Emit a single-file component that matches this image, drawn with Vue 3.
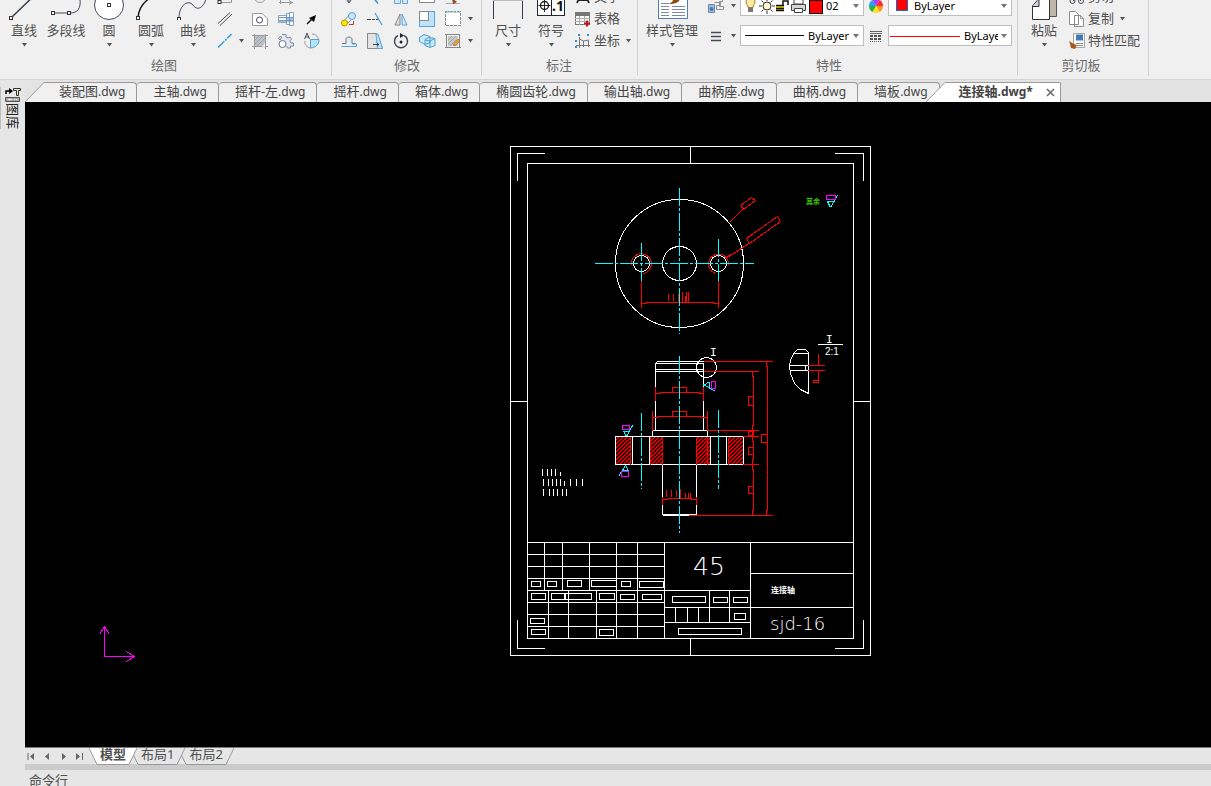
<script setup>
import { ref } from 'vue'

const curveTools = [
  { id: 'line', label: '直线', caret: true },
  { id: 'polyline', label: '多段线', caret: false },
  { id: 'circle', label: '圆', caret: true },
  { id: 'arc', label: '圆弧', caret: true },
  { id: 'spline', label: '曲线', caret: true },
]
const dimTools = [
  { id: 'dimension', label: '尺寸' },
  { id: 'symbol', label: '符号' },
]
const drawGrid = [
  'leader', '', 'ellipse', 'distance', '',
  'parallel', '', 'region', 'bolt', 'arrow',
  'axis', 'caret', 'hatch', 'gear', 'turn',
]
const modifyGrid = [
  'move', 'trim', 'array', 'stretch', 'brush', '',
  'copyobj', 'extend', 'mirror', 'scale', 'frame', 'caret',
  'offset', 'chamfer', 'rotate', 'block', 'edit', 'caret',
]
const textTools = [
  { id: 'text', label: '文字', caret: false },
  { id: 'table', label: '表格', caret: false },
  { id: 'coord', label: '坐标', caret: true },
]
const clipTools = [
  { id: 'cut', label: '剪切', caret: false },
  { id: 'copy', label: '复制', caret: true },
  { id: 'match', label: '特性匹配', caret: false },
]
const files = ['装配图', '主轴', '摇杆-左', '摇杆', '箱体', '椭圆齿轮', '输出轴', '曲柄座', '曲柄', '墙板', '连接轴']
const activeFile = ref(10)
const layouts = ['模型', '布局1', '布局2']
const activeLayout = ref(0)

const seg = (list) => list.map(([a, b, c, d]) => `M${a} ${b}L${c} ${d}`).join('')
const box = (list) => list.map(([a, b, c, d]) => `M${a} ${b}H${c}V${d}H${a}Z`).join('')

const sheet = box([[510, 146, 870, 655], [527, 163, 853, 638]]) + seg([
  [517, 153, 544, 153], [517, 153, 517, 180], [835, 153, 863, 153], [863, 153, 863, 180],
  [517, 620, 517, 648], [517, 648, 544, 648], [863, 620, 863, 648], [835, 648, 863, 648],
  [690, 146, 690, 163], [690, 638, 690, 655], [510, 401, 527, 401], [853, 401, 870, 401],
])

const titleBlock = seg([
  [527, 542, 853, 542],
  ...[554, 566, 578, 590, 602, 614, 626].map((y) => [527, y, 664, y]),
  ...[544, 562, 589, 616, 637].map((x) => [x, 542, x, 590]),
  ...[548, 568, 596, 616, 637].map((x) => [x, 590, x, 638]),
  [664, 542, 664, 638], [750, 542, 750, 638], [664, 590, 750, 590],
  [750, 573, 853, 573], [664, 607, 853, 607], [664, 622, 750, 622],
  [709, 590, 709, 622], [729, 590, 729, 622],
  ...[675, 687, 698].map((x) => [x, 607, x, 622]),
]) + box([
  [531, 581, 540, 586], [547, 581, 556, 586], [567, 580, 581, 586], [591, 580, 616, 586],
  [621, 581, 630, 586], [639, 581, 663, 587], [531, 593, 545, 599], [551, 593, 564, 599],
  [565, 593, 591, 599], [599, 593, 614, 599], [620, 594, 634, 599], [642, 594, 661, 599],
  [530, 618, 544, 623], [531, 629, 545, 634], [599, 629, 613, 635], [672, 596, 705, 602],
  [713, 597, 727, 602], [733, 597, 747, 602], [734, 613, 745, 619], [678, 628, 741, 634],
])

const notes = seg([
  ...[542, 547, 551, 555].map((x) => [x, 468, x, 475]), [560, 471, 560, 475],
  ...[543, 548, 552, 556, 560, 570, 576, 582].map((x) => [x, 478, x, 485]), [564, 480, 564, 485],
  ...[543, 549, 553, 557, 562, 566].map((x) => [x, 488, x, 495]),
])

const outline = seg([
  [657, 361, 703, 361], [657, 361, 655, 363], [655, 363, 703, 363], [655, 369, 703, 369],
  [656, 371, 703, 371], [655, 363, 655, 430], [703, 363, 703, 430], [696, 363, 696, 371],
  [652, 430, 707, 430], [652, 430, 652, 436], [707, 430, 707, 436],
  [632, 436, 632, 464], [649, 436, 649, 464], [710, 436, 710, 464], [726, 436, 726, 464],
  [662, 464, 662, 514], [696, 464, 696, 514], [662, 514, 696, 514], [663, 515, 689, 515],
  [818, 344, 842, 344], [808, 352, 808, 393], [794, 353, 808, 353],
  [789, 365, 808, 365], [790, 370, 808, 370], [805, 365, 805, 370],
]) + box([[615, 436, 743, 464]])

const dims = seg([
  [641, 281, 641, 307], [718, 281, 718, 307], [646, 302, 713, 302], [641, 303, 646, 303], [713, 303, 718, 303],
  [668, 294, 668, 300], [673, 294, 673, 300], [678, 294, 678, 301], [682, 292, 682, 302],
  [685, 296, 685, 302], [686, 292, 686, 302], [688, 292, 688, 302],
  [730, 221, 743, 208], [727, 257, 750, 242], [727, 256, 731, 254],
  [704, 361, 772, 361], [704, 371, 758, 371], [707, 430, 758, 430], [743, 436, 758, 436],
  [743, 464, 758, 464], [689, 515, 772, 515],
  [655, 387, 655, 400], [703, 387, 703, 400], [660, 392, 699, 392], [655, 393, 660, 393], [699, 393, 703, 393],
  [652, 411, 652, 430], [707, 411, 707, 430], [657, 416, 702, 416], [652, 417, 657, 417], [702, 417, 707, 417],
  [662, 497, 662, 504], [696, 497, 696, 504], [667, 498, 691, 498], [662, 499, 667, 499], [691, 499, 696, 499],
  [666, 490, 666, 496], [671, 490, 671, 496], [676, 490, 676, 496], [680, 489, 680, 498],
  [685, 493, 685, 497], [688, 493, 688, 497], [690, 493, 690, 497],
  [752, 371, 752, 376], [753, 376, 753, 425], [752, 425, 752, 441], [753, 441, 753, 459],
  [752, 459, 752, 469], [753, 469, 753, 510], [752, 510, 752, 515],
  [766, 361, 766, 366], [767, 366, 767, 510], [766, 510, 766, 515],
  [808, 365, 824, 365], [808, 370, 824, 370], [818, 354, 818, 365], [818, 370, 818, 382],
]) + box([
  [672, 387, 686, 392], [672, 411, 686, 416], [748, 396, 753, 405], [748, 431, 753, 435],
  [748, 447, 753, 454], [748, 486, 753, 493], [761, 434, 767, 442], [813, 380, 818, 382],
])
const hatchEdges = seg([630, 650, 662, 696, 707, 728].map((x) => [x, 437, x, 464]))
const hatchAreas = [[616, 15], [650, 13], [696, 14], [728, 15]]
const axes = seg([
  [594, 263, 753, 263], [679, 187, 679, 333], [641, 242, 641, 280], [718, 238, 718, 280],
  [679, 355, 679, 532], [641, 412, 641, 488], [718, 409, 718, 488],
])
const finish = seg([
  [827, 201, 834, 201], [827, 201, 830, 207], [830, 207, 837, 195],
  [703, 385, 709, 381], [709, 381, 709, 388], [703, 384, 715, 391],
  [622, 431, 629, 431], [623, 431, 626, 436], [626, 436, 632, 425],
  [622, 470, 628, 470], [628, 470, 625, 465], [625, 465, 618, 476],
])
const finishTags = box([[826, 195, 835, 199], [711, 381, 715, 388], [622, 425, 629, 429], [621, 471, 628, 476]])
</script>

<template>
  <div class="app">
    <svg class="defs" aria-hidden="true">
      <symbol id="caret" viewBox="0 0 7 6"><path d="M1 1h5L3.500 4.500z" fill="#555" /></symbol>

      <symbol id="line" viewBox="0 0 40 34"><path d="M8 31 38 2" stroke="#394150" stroke-width="1.500" /><rect x="5.500" y="30.500" width="3" height="3" class="node" /></symbol>
      <symbol id="polyline" viewBox="0 0 40 34"><path d="M7 27H24C32 27 35 22 34 13" class="ink" /><rect x="5.500" y="25.500" width="3" height="3" class="node" /><rect x="21.500" y="25.500" width="3" height="3" class="node" /></symbol>
      <symbol id="circle" viewBox="0 0 40 34"><circle cx="20" cy="19" r="14.500" fill="#fff" stroke="#444b58" /><rect x="18.500" y="17.500" width="3" height="3" class="node" /></symbol>
      <symbol id="arc" viewBox="0 0 40 34"><path d="M7 31C8 22 13 15 22 10" fill="none" stroke="#111" stroke-width="1.400" /><rect x="5.500" y="30.500" width="3" height="3" class="node" /></symbol>
      <symbol id="spline" viewBox="0 0 40 34"><path d="M6 32C6 20 14 14 19 18C23 24 28 24 32 16L33 12" class="ink" /><rect x="4.500" y="31.500" width="3" height="3" class="node" /></symbol>
      <symbol id="dimension" viewBox="0 0 40 34"><path d="M5.500 8V33M34.500 8V33" stroke="#394150" /><path d="M5 14.500H35" stroke="#bbb" /></symbol>
      <symbol id="symbol" viewBox="0 0 40 34"><rect x="6.500" y="4.500" width="27" height="25" fill="#fff" stroke="#222b3a" /><path d="M20.500 5V29M7.500 19.500H19.500M13.500 13V26" stroke="#222" /><circle cx="13.500" cy="19.500" r="4" fill="none" stroke="#222" stroke-width="1.400" /></symbol>
      <symbol id="styles" viewBox="0 0 40 34"><rect x="6.500" y="2.500" width="29" height="30" fill="#fff" stroke="#4d7fb0" /><path d="M9 17.500H17M9 20.500H17M9 23.500H17M9 26.500H17M9 29.500H17M20 20.500H33M20 23.500H33M20 26.500H33M20 29.500H33" stroke="#7d8aa0" /><path d="M28 10c1 5-3 8-11 8 4-2 4-4 6-8z" fill="#8a4b14" /></symbol>
      <symbol id="paste" viewBox="0 0 40 34"><path d="M22 8H33V30H22z" fill="#c0b8aa" /><path d="M32.500 8V30.500H26" fill="none" stroke="#555" /><path d="M8.500 20 14.500 13H25.500V33.500H8.500z" fill="#fff" stroke="#333" /><path d="M9 20.500h6V13" fill="#cbd3dc" stroke="#333" /></symbol>

      <symbol id="leader" viewBox="0 0 18 18"><path d="M3 14.500H15.500V9" class="thin" /><rect x="2" y="12.500" width="3" height="3" class="node" /></symbol>
      <symbol id="ellipse" viewBox="0 0 18 18"><circle cx="9" cy="8.500" r="6" class="thin" /></symbol>
      <symbol id="distance" viewBox="0 0 18 18"><path d="M3.500 6V16M2 14.500H16M12 12.500l3 2-3 2" class="thin" /></symbol>
      <symbol id="parallel" viewBox="0 0 18 18"><path d="M2 13.500 14 2.500M4 15.500 16 4" class="ink" stroke="#555" /></symbol>
      <symbol id="region" viewBox="0 0 18 18"><path d="M1.500 3.500H11L16.500 8.500V15.500H1.500z" fill="#fff" stroke="#999" /><circle cx="8.500" cy="10" r="3" class="ink" /></symbol>
      <symbol id="bolt" viewBox="0 0 18 18"><path d="M1.500 5.500h8v-2h3v-1h4v13h-4v-1h-3v-2h-8z" fill="#fff" stroke="#8aa0bd" /><path d="M10 8h6v4h-6zM2 10h7v2H2z" fill="#9cc3e8" /><path d="M2 7.500H16M2 10.500H16M9.500 4V14M12.500 3V15" stroke="#6f94bf" /></symbol>
      <symbol id="arrow" viewBox="0 0 18 18"><path d="M4 14 9 9" stroke="#111" stroke-width="1.500" /><path d="M13 5 11 12 6 8z" fill="#000" /></symbol>
      <symbol id="axis" viewBox="0 0 18 18"><path d="M2 15.500 15.500 2" stroke="#2196d6" stroke-width="1.300" stroke-dasharray="9 1 2 1" /></symbol>
      <symbol id="hatch" viewBox="0 0 18 18"><rect x="3" y="4" width="12" height="11" fill="#bcc0c8" /><path d="M1 3.500H17M3.500 2V17M14.500 2V17M1 14.500H17" stroke="#999" /><path d="M4 8 8 4M4 12 12 4M6 14 14 6" stroke="#999" stroke-width=".7" /><path d="M9 14.500c3 0 5-2 5-5v5z" fill="#fff" /></symbol>
      <symbol id="gear" viewBox="0 0 18 18"><path d="M5 2.500h4v2.500l2 1 2-1 1.500 2-1.500 2 1 2h2.500v3h-3v2h-3l-1-2M3 8 1.500 6.500 3 4.500l2 .5z" fill="#e3e7f2" stroke="#7e88a0" /><circle cx="5.500" cy="12" r="3.500" fill="#fff" stroke="#66708a" /></symbol>
      <symbol id="turn" viewBox="0 0 18 18"><path d="M7.500 7.500h8.500c0 5-3 8-8.500 8.500z" fill="#b8e3fb" stroke="#4ba3d4" /><path d="M9 2c4 0 6 3 6.500 5.500M2 9c-1 3 2 7 6 7" class="thin" /><path d="M1.500 7 4 1 6.500 7M2.500 5h3" class="ink" stroke="#111" /></symbol>

      <symbol id="move" viewBox="0 0 18 18"><path d="M9 6v8M7 12l2 3 2-3" class="ink" /></symbol>
      <symbol id="trim" viewBox="0 0 18 18"><path d="M6 8 12 15.500" stroke="#3b93d0" stroke-width="1.500" /></symbol>
      <symbol id="array" viewBox="0 0 18 18"><path d="M2.500 7.500h6v8h-6zM10.500 7.500h5v8h-5z" fill="#cfe8f8" stroke="#6da6cf" /></symbol>
      <symbol id="stretch" viewBox="0 0 18 18"><rect x="1.500" y="7.500" width="15" height="7" fill="#fff" stroke="#888" /></symbol>
      <symbol id="brush" viewBox="0 0 18 18"><path d="M2 15.500h14" stroke="#aaa" /><path d="m8 10 5 4-4 2z" fill="#8e4a25" /></symbol>
      <symbol id="copyobj" viewBox="0 0 18 18"><path d="M3 12 9 5M7 14l7-7" stroke="#999" /><circle cx="12" cy="6" r="3.500" fill="#c9e8fb" stroke="#4ba3d4" /><circle cx="4.500" cy="13" r="3" fill="#ffe600" stroke="#b29b00" /><path d="M9 14.500h4.500V11" fill="none" stroke="#b33" /></symbol>
      <symbol id="extend" viewBox="0 0 18 18"><path d="M1 9.500h4m1 0h3m1 0h3" stroke="#444" /><path d="M9 3 16 15" stroke="#4ba3d4" stroke-width="1.300" /></symbol>
      <symbol id="mirror" viewBox="0 0 18 18"><path d="M8 4v11H3z" fill="#ddd" stroke="#888" /><path d="M10 4v11h5z" fill="#cfe8fb" stroke="#5aa4d2" /></symbol>
      <symbol id="scale" viewBox="0 0 18 18"><rect x="1.500" y="1.500" width="15" height="15" fill="#bfe3f8" stroke="#58a6d8" /><rect x="1.500" y="1.500" width="9" height="9" fill="#fff" stroke="#888" /></symbol>
      <symbol id="frame" viewBox="0 0 18 18"><rect x="1.500" y="2" width="15" height="13.500" fill="#fff" stroke="#888" stroke-dasharray="3 1" /><path d="M1 1.500H17" stroke="#58a6d8" stroke-dasharray="2 1" /></symbol>
      <symbol id="offset" viewBox="0 0 18 18"><path d="M2 11.500h4V8c-1-4 7-4 6 0v3.500h4" stroke="#777" fill="#d8effc" /><path d="M1.500 14.500h15V12H12" fill="none" stroke="#58a6d8" /></symbol>
      <symbol id="chamfer" viewBox="0 0 18 18"><path d="M1.500 1.500h9l6 15h-15z" fill="#e3e3e3" stroke="#888" /><path d="M10 2h2l4.500 14.500h-5z" fill="#bfe3f8" stroke="#58a6d8" /><path d="M7 12.500h6M11 11l2 1.500-2 1.500" class="ink" /></symbol>
      <symbol id="rotate" viewBox="0 0 18 18"><path d="M6 3.500a6.500 6.500 0 1 0 6 0" class="ink" stroke-width="1.500" /><path d="M8 1v5l4-2.500z" fill="#222" /><circle cx="9" cy="10" r="1.500" fill="#222" /></symbol>
      <symbol id="block" viewBox="0 0 18 18"><path d="M1.500 5.500 6 2.500l6 2v6l-5 2-5.500-3zM7 7.500l4-2 6 1v7l-5 2-5-2z" fill="#cceafb" stroke="#4a9fce" /><path d="m7 8 5 1 4-2m-4 2v6" fill="none" stroke="#4a9fce" /></symbol>
      <symbol id="edit" viewBox="0 0 18 18"><path d="M2.500 2V16M1 2.500h15M15.500 2v14M1 15.500h16" stroke="#888" /><rect x="4" y="4" width="10" height="10" fill="#c8c8c8" /><path d="m4 8 4-4M4 12l8-8M6 14l6-6" stroke="#999" stroke-width=".7" /><path d="m9 13 5-6 2 2-5 5z" fill="#eaa02e" stroke="#a66b1d" stroke-width=".6" /></symbol>

      <symbol id="text" viewBox="0 0 18 18"><path d="M3 15 8 4h2l5 11M5 12h8" fill="none" stroke="#222" stroke-width="1.800" /></symbol>
      <symbol id="table" viewBox="0 0 18 18"><rect x="1.500" y="2.500" width="14" height="12" fill="#fff" stroke="#777" /><path d="M2 3h13v3H2z" fill="#777" /><path d="M1 8.500h15M1 11.500h15M5.500 6v9M10.500 6v9" stroke="#aaa" /><path d="M10 13.500h6M13 10.500v6" stroke="#c4161c" stroke-width="2" /></symbol>
      <symbol id="coord" viewBox="0 0 18 18"><path d="M5.500 5v11M2 13.500h14M5.500 7l4 2 5-1v7M9.500 9v6" fill="none" stroke="#777" /><path d="M4 2l2 2m0-2L4 4M13 2l2 2m0-2-2 2M1 8l2 2m0-2-2 2M1 14l2 2m0-2-2 2" stroke="#2f8dd0" /></symbol>
      <symbol id="cut" viewBox="0 0 18 18"><path d="M5 13 14 5M13 13 5 5" class="ink" /><circle cx="4.500" cy="13" r="2.500" class="ink" /><circle cx="13" cy="13" r="2.500" class="ink" /></symbol>
      <symbol id="copy" viewBox="0 0 18 18"><path d="M1.500 1.500h6l3 3v10h-9zM6.500 5.500h6l3 3v8h-9z" fill="#fff" stroke="#8c8c8c" /><path d="M12.500 5.500v3h3" class="thin" /></symbol>
      <symbol id="match" viewBox="0 0 18 18"><rect x="5.500" y="1.500" width="11" height="14" fill="#fff" stroke="#a6a6a6" /><path d="M8 2.500h7v6H8z" fill="#3f79b7" /><path d="M8 11.500h7M9 13.500h6" stroke="#888" /><path d="m1 9 5 3 3 1-2 4-4-1-1-4z" fill="#a8581c" /></symbol>
      <symbol id="layers" viewBox="0 0 18 18"><path d="M1.500 7.500h6v8h-6z" fill="#9dbde0" stroke="#718aa8" /><path d="M7.500 5.500h6v3h-4v4h7v-3h-4v-5h3v-2" fill="none" stroke="#8b8f96" /><circle cx="4.500" cy="12" r="2" fill="#3f79b7" /></symbol>
      <symbol id="rows" viewBox="0 0 18 18"><path d="M4 5.500h10M4 9.500h10M4 13.500h10" stroke="#444b58" stroke-width="1.400" /></symbol>
      <symbol id="wheel" viewBox="0 0 18 18"><path d="M9 9 5.500 3a7 7 0 0 1 7 0z" fill="#a63cff" /><path d="m9 9 3.500-6A7 7 0 0 1 16 9z" fill="#ff2b2b" /><path d="M9 9h7a7 7 0 0 1-3.500 6z" fill="#ff9820" /><path d="m9 9 3.500 6a7 7 0 0 1-7 0z" fill="#ffe11c" /><path d="m9 9-3.500 6A7 7 0 0 1 2 9z" fill="#29b14a" /><path d="M9 9H2a7 7 0 0 1 3.500-6z" fill="#2c9bea" /></symbol>
      <symbol id="weights" viewBox="0 0 18 18"><path d="M3 4.500h12M3 6.500h12" stroke="#666" /><path d="M3 9h12M3 12h12" stroke="#555" stroke-width="2" stroke-dasharray="3 1" /><path d="M3 14.500h12" stroke="#666" stroke-dasharray="1 1" /></symbol>
    </svg>

    <header class="ribbon">
      <section class="group draw">
        <div class="body">
          <button v-for="t in curveTools" :key="t.id" class="big" :class="{ wide: t.id === 'polyline' }">
            <svg width="40" height="34"><use :href="'#' + t.id" /></svg>
            <span>{{ t.label }}</span>
            <svg v-if="t.caret" width="7" height="6"><use href="#caret" /></svg>
          </button>
          <div class="grid draw-grid">
            <template v-for="(id, i) in drawGrid" :key="i">
              <span v-if="!id" />
              <button v-else :aria-label="id"><svg :class="{ caret: id === 'caret' }"><use :href="'#' + id" /></svg></button>
            </template>
          </div>
        </div>
        <h2>绘图</h2>
      </section>

      <section class="group modify">
        <div class="body">
          <div class="grid modify-grid">
            <template v-for="(id, i) in modifyGrid" :key="i">
              <span v-if="!id" />
              <button v-else :aria-label="id"><svg :class="{ caret: id === 'caret' }"><use :href="'#' + id" /></svg></button>
            </template>
          </div>
        </div>
        <h2>修改</h2>
      </section>

      <section class="group annotate">
        <div class="body">
          <button v-for="t in dimTools" :key="t.id" class="big">
            <svg width="40" height="34"><use :href="'#' + t.id" /><text v-if="t.id === 'symbol'" x="21" y="25" class="tol">.1</text></svg>
            <span>{{ t.label }}</span>
            <svg width="7" height="6"><use href="#caret" /></svg>
          </button>
          <div class="stack">
            <button v-for="t in textTools" :key="t.id" class="small">
              <svg width="18" height="18"><use :href="'#' + t.id" /></svg>
              <span>{{ t.label }}</span>
              <svg v-if="t.caret" width="7" height="6"><use href="#caret" /></svg>
            </button>
          </div>
        </div>
        <h2>标注</h2>
      </section>

      <section class="group props">
        <div class="body">
          <button class="big style">
            <svg width="40" height="34"><use href="#styles" /></svg>
            <span>样式管理</span>
            <svg width="7" height="6"><use href="#caret" /></svg>
          </button>
          <div class="fields">
            <button class="pick" aria-label="图层管理"><svg width="18" height="18"><use href="#layers" /></svg><svg width="7" height="6"><use href="#caret" /></svg></button>
            <label class="field layer">
              <svg class="swatch" width="84" height="20" aria-label="图层">
                <path d="M5 5.500a4.500 4.500 0 1 1 9 0c0 3-2 3-2 6H7c0-3-2-3-2-6z" fill="#ffeaa0" stroke="#9a7b3c" /><path d="M7 12h5v4H7z" fill="#777" />
                <circle cx="26" cy="10" r="4" fill="#fff3cc" stroke="#333" /><path d="M26 2v3M26 15v3M18 10h3M31 10h3M20.500 4.500l2 2M29.500 13.500l2 2M31.500 4.500l-2 2M22.500 13.500l-2 2" stroke="#333" />
                <path d="M35 9h8v6h-8z" fill="#e0d200" /><path d="M35 9.500h8M35 12.500h8M35 14.500h8M42 9V5h5v4" fill="none" stroke="#111" stroke-width="1.500" />
                <path d="M53 3h9v5h-9z" fill="#fff" stroke="#444" /><path d="M50.500 8.500h14v6h-14z" fill="#d3d7dc" stroke="#444" /><path d="M53.500 12.500h8v4h-8z" fill="#fff" stroke="#444" />
                <rect x="68.500" y="4.500" width="13" height="13" fill="#f00" stroke="#111" />
              </svg>
              <select aria-label="图层"><option>02</option></select>
            </label>
            <button class="pick centre" aria-label="颜色"><svg width="18" height="18"><use href="#wheel" /></svg></button>
            <label class="field colour">
              <svg class="swatch" width="20" height="20"><rect x="7.500" y="3.500" width="11" height="11" fill="#f00" stroke="#0b70cf" /></svg>
              <select aria-label="颜色"><option>ByLayer</option></select>
            </label>
            <button class="pick" aria-label="线型管理"><svg width="18" height="18"><use href="#rows" /></svg><svg width="7" height="6"><use href="#caret" /></svg></button>
            <label class="field linetype">
              <svg class="swatch" width="64" height="20"><path d="M4 9.500h59" stroke="#000" /></svg>
              <select aria-label="线型"><option>ByLayer</option></select>
            </label>
            <button class="pick centre" aria-label="线宽设置"><svg width="18" height="18"><use href="#weights" /></svg></button>
            <label class="field weight">
              <svg class="swatch" width="72" height="20"><path d="M1 10.500h70" stroke="#f00" /></svg>
              <select aria-label="线宽"><option>ByLayer</option></select>
            </label>
          </div>
        </div>
        <h2>特性</h2>
      </section>

      <section class="group clip">
        <div class="body">
          <button class="big">
            <svg width="40" height="34"><use href="#paste" /></svg>
            <span>粘贴</span>
            <svg width="7" height="6"><use href="#caret" /></svg>
          </button>
          <div class="stack">
            <button v-for="t in clipTools" :key="t.id" class="small">
              <svg width="18" height="18"><use :href="'#' + t.id" /></svg>
              <span>{{ t.label }}</span>
              <svg v-if="t.caret" width="7" height="6"><use href="#caret" /></svg>
            </button>
          </div>
        </div>
        <h2>剪切板</h2>
      </section>
    </header>

    <div class="work">
      <aside class="side">
        <button class="library">
          <svg width="16" height="16"><path d="M1 7V4h4" fill="none" stroke="#000" stroke-width="1.500" /><path d="M4 1v6l4-3z" fill="#000" /><path d="M8.500 1.500h7v2h-2v5h-2v-5h-3z" fill="#eee9b8" stroke="#333" /><path d="M.5 10.500h14v4H.5z" fill="#aaa" stroke="#555" /><path d="M3 12.500h4m2 0h1m1 0h1" stroke="#fff" /></svg>
          <span>图库</span>
        </button>
      </aside>

      <main class="main">
        <nav class="files">
          <button v-for="(f, i) in files" :key="f" class="file" :class="{ first: i === 0, active: i === activeFile }" @click="activeFile = i">
            <svg v-if="i === 0 || i === activeFile" class="slant" width="20" height="20"><path d="M0 20 19 .5H20V20z" /><path d="M0 20 19 .5H20" class="edge" /></svg>
            <span class="name">{{ f }}<span class="ext">.dwg{{ i === activeFile ? '*' : '' }}</span></span>
            <svg v-if="i === activeFile" class="close" width="9" height="9"><path d="m1 1 7 7M8 1 1 8" stroke="#666" stroke-width="1.500" /></svg>
          </button>
        </nav>

        <svg class="canvas" viewBox="25 102 1186 645" preserveAspectRatio="xMinYMin meet">
          <defs>
            <pattern id="section-lines" width="4" height="4" patternUnits="userSpaceOnUse"><path d="M-1 1 1-1M-1 5 5-1M3 5 5 3" stroke="#f00" stroke-width="1.400" shape-rendering="auto" /></pattern>
          </defs>
          <g fill="none" transform="translate(.5 .5)" shape-rendering="crispEdges">
            <g stroke="#fff">
              <g stroke-linecap="square">
                <path :d="sheet" />
                <path :d="titleBlock" />
                <path :d="outline" />
              </g>
              <path :d="notes" />
              <circle cx="679" cy="263" r="64" />
              <circle cx="679" cy="263" r="17" />
              <circle cx="641" cy="263" r="8" />
              <circle cx="718" cy="263" r="8" />
              <circle cx="706" cy="367" r="10" />
              <path d="M808 352 805 349H797L793 353 790 360 789 366 790 373 794 383 800 389 808 393" />
            </g>
            <rect v-for="[x, w] in hatchAreas" :key="x" :x="x" y="437" :width="w" height="27" fill="url(#section-lines)" transform="translate(-.5 -.5)" />
            <g stroke="#f00">
              <path :d="hatchEdges" stroke-dasharray="6 1" />
              <path :d="dims" stroke-linecap="square" />
              <path d="M631 265A10 10 0 1 1 643 273M728 265A10 10 0 1 0 715 273" />
              <path d="M740 205 751 197 755 200 743 209ZM746 238 777 216 780 221 749 243Z" />
            </g>
            <g stroke="#0ff">
              <path :d="axes" stroke-dasharray="18 2 3 2" />
              <path :d="finish" />
            </g>
            <g stroke="#f0f">
              <path :d="finishTags" />
              <path d="M104 626V656H134M99 634 104 626 109 634M126 651 134 656 126 661" />
            </g>
          </g>
          <g class="lettering">
            <text x="693" y="575" class="t25">45</text>
            <text x="770" y="630" class="t18">sjd-16</text>
            <text x="771" y="593" class="cjk">连接轴</text>
            <text x="806" y="204" class="cjk green">其余</text>
            <text x="710" y="356" class="mono">I</text>
            <text x="826" y="343" class="mono">I</text>
            <text x="825" y="355" class="ratio">2:1</text>
          </g>
        </svg>

        <nav class="layouts">
          <button class="step" aria-label="第一个"><svg width="9" height="9"><path d="M1 1v7" stroke="#666" /><path d="M7 1v7L3 4.500z" fill="#666" /></svg></button>
          <button class="step" aria-label="上一个"><svg width="9" height="9"><path d="M6 1v7L2 4.500z" fill="#666" /></svg></button>
          <button class="step" aria-label="下一个"><svg width="9" height="9"><path d="M3 1v7l4-3.500z" fill="#666" /></svg></button>
          <button class="step" aria-label="最后一个"><svg width="9" height="9"><path d="M1 1v7l4-3.500z" fill="#666" /><path d="M7.500 1v7" stroke="#666" /></svg></button>
          <button v-for="(l, i) in layouts" :key="l" class="layout" :class="{ active: i === activeLayout }" :style="{ zIndex: layouts.length - i }" @click="activeLayout = i">
            <svg width="8" height="17"><path d="M0 0 8 16.500V0z" /><path d="M0 0 8 16.500" class="edge" /></svg>
            <span>{{ l }}</span>
            <svg width="8" height="17"><path d="M8 0 0 16.500V0z" /><path d="M8 0 0 16.500" class="edge" /></svg>
          </button>
        </nav>
        <div class="splitter" />
        <footer class="command">命令行</footer>
      </main>
    </div>
  </div>
</template>

<style>
body { margin: 0; }
</style>

<style scoped>
.app {
  display: flex;
  flex-direction: column;
  height: 100vh;
  overflow: hidden;
  background: #e6e6e6;
  color: #505050;
  font: 13px/18px "Noto Sans", "Noto Sans CJK SC", sans-serif;
}
.defs { position: absolute; width: 0; height: 0; }
button { border: 0; padding: 0; margin: 0; background: none; color: inherit; font: inherit; }
svg { display: block; flex: none; }
.node { fill: #fff; stroke: #333; }
.ink { fill: none; stroke: #444b58; }
.thin { fill: none; stroke: #999; }
.tol { font: bold 14px "Noto Sans", sans-serif; fill: #111; }

.ribbon { display: flex; align-items: flex-end; height: 79px; flex: none; overflow: hidden; background: #f0f0f0; border-bottom: 1px solid #d6d6d6; }
.group { height: 93px; flex: none; position: relative; }
.group::after { content: ""; position: absolute; right: 0; top: 0; bottom: 3px; width: 1px; background: #d2d2d2; }
.body { display: flex; height: 66px; }
.group h2 { margin: 0; font-weight: 400; font-size: 13px; line-height: 26px; text-align: center; color: #6b6b6b; }
.big { display: flex; flex-direction: column; align-items: center; width: 42px; white-space: nowrap; }
.big.wide { width: 44px; }
.big:first-child { width: 40px; }
.big span { line-height: 20px; margin-bottom: 2px; }
.grid { display: grid; grid-auto-rows: 22px; }
.grid button { display: flex; align-items: center; justify-content: center; }
.grid svg { width: 18px; height: 18px; }
.grid svg.caret { width: 7px; height: 6px; }
.draw { padding: 0 7px 0 4px; }
.draw h2 { padding-right: 1px; }
.draw-grid { grid-template-columns: 22px 11px repeat(3, 26px); }
.modify { padding: 0 8px 0 4px; }
.modify h2 { padding-left: 4px; }
.modify-grid { grid-template-columns: repeat(5, 26px) 8px; }
.stack { display: flex; flex-direction: column; }
.small { display: flex; align-items: center; height: 22px; gap: 2px; }
.small span { margin-bottom: 2px; }
.small svg:last-child:not(:first-child) { margin-left: 3px; }
.annotate { padding: 0 6px 0 4px; }
.annotate .big:first-child { width: 44px; }
.annotate .stack { margin-left: 2px; }
.props { padding: 0 6px 0 8px; }
.props .style { width: 52px; }
.fields { display: grid; grid-template-columns: 33px 124px 24px 124px; grid-template-rows: 21px 21px; row-gap: 9px; padding: 9px 0 0 9px; }
.pick { display: flex; align-items: center; gap: 5px; }
.pick.centre { justify-content: center; }
.field { position: relative; display: flex; background: #fff; border: 1px solid #bdbdbd; box-sizing: border-box; }
.field::after { content: ""; position: absolute; right: 4px; top: 8px; border: 3px solid transparent; border-top: 4px solid #777; border-bottom: 0; }
.swatch { position: absolute; left: 0; top: 0; pointer-events: none; }
.field select { appearance: none; flex: 1; min-width: 0; border: 0; margin: 0 13px 0 0; padding: 0; background: none; color: #000; font: 11px/19px "Noto Sans", "Noto Sans CJK SC", sans-serif; }
.layer select { padding-left: 85px; }
.colour select { padding-left: 25px; }
.linetype select { padding-left: 67px; }
.weight select { padding-left: 75px; }
.clip { padding: 0 9px 0 4px; }
.clip .big:first-child { width: 44px; }
.clip .stack { margin-left: 2px; }

.work { display: flex; flex: 1; min-height: 0; }
.side { width: 25px; flex: none; padding-top: 7px; box-sizing: border-box; }
.library { display: flex; flex-direction: column; align-items: center; width: 25px; border-left: 1px solid #bdbdbd; color: #222; }
.library span { writing-mode: vertical-rl; text-orientation: sideways; line-height: 16px; }
.main { display: flex; flex: 1; flex-direction: column; min-width: 0; }
.files { display: flex; align-items: flex-end; flex: none; height: 22px; background: #e3e3e3; }
.file { position: relative; display: flex; align-items: center; height: 20px; box-sizing: border-box; padding: 0 11px 0 16px; border: 1px solid #9a9a9a; border-width: 1px 1px 0 0; border-radius: 0 4px 0 0; background: #f0f0f0; color: #444; white-space: nowrap; line-height: 17px; }
.file + .file { border-top-left-radius: 4px; }
.file .name { margin-bottom: 2px; }
.file .ext { font-size: 12px; }
.file.first { margin-left: 20px; padding-left: 14px; }
.slant { position: absolute; right: 100%; top: -1px; fill: #f0f0f0; }
.file.active { z-index: 1; margin-left: 6px; padding: 0 5px 0 13px; border-radius: 0 2px 0 0; background: #fff; font-weight: 700; }
.file.active .slant { fill: #fff; }
.edge { fill: none; stroke: #9a9a9a; }
.close { margin-left: 13px; }
.canvas { flex: 1; min-height: 0; width: 100%; background: #000; }
.lettering { fill: #fff; font-family: "DejaVu Sans", sans-serif; font-weight: 200; }
.t25 { font-size: 25px; }
.t18 { font-size: 18px; }
.mono { font: 11px "DejaVu Sans Mono", monospace; }
.ratio { font: 10px "Liberation Sans", sans-serif; }
.cjk { font: bold 8px "Noto Sans CJK SC", sans-serif; }
.green { font-size: 7px; fill: #3fd000; }
.layouts { display: flex; align-items: center; flex: none; height: 17px; padding-left: 2px; box-sizing: border-box; border-top: 1px solid #777; }
.step { width: 16px; height: 17px; display: flex; align-items: center; }
.layout { position: relative; display: flex; margin-left: -7px; height: 17px; line-height: 12px; fill: #e6e6e6; }
.step + .layout { margin-left: -2px; }
.layout span { height: 16px; border-bottom: 1px solid #9a9a9a; background: #e6e6e6; padding: 0 3px; }
.layout.active { fill: #fff; font-weight: 700; }
.layout.active span { background: #fff; }
.splitter { flex: none; height: 6px; background: #cbcbcb; }
.command { flex: none; height: 16px; overflow: hidden; padding-left: 4px; line-height: 20px; }
</style>
